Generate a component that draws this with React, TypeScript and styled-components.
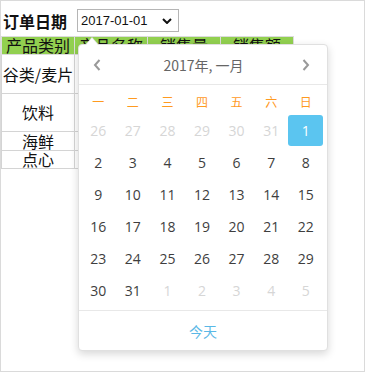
import React from "react";
import styled, { createGlobalStyle } from "styled-components";

const GlobalStyle = createGlobalStyle`
  html, body {
    margin: 0;
    padding: 0;
    background: #fff;
  }
  body {
    font-family: "Noto Sans CJK SC", "Noto Sans", sans-serif;
  }
`;

const Frame = styled.div`
  position: relative;
  width: 365px;
  height: 372px;
  box-sizing: border-box;
  border: 1px solid #dadada;
  overflow: hidden;
  background: #fff;
`;

const FilterRow = styled.div`
  display: flex;
  align-items: center;
  gap: 10px;
  padding: 8px 0 4px 2px;
`;

const Label = styled.span`
  font-size: 16px;
  font-weight: bold;
  color: #111;
  line-height: 20px;
`;

const FakeSelect = styled.div`
  display: flex;
  align-items: center;
  justify-content: space-between;
  box-sizing: border-box;
  width: 102px;
  height: 23px;
  padding: 0 6px 0 3px;
  border: 1px solid #b5b5b5;
  font-family: "Liberation Sans", Arial, sans-serif;
  font-size: 13px;
  color: #111;
`;

const Table = styled.table`
  border-collapse: collapse;
  table-layout: fixed;
  width: 290px;
  font-size: 16px;
  color: #111;
`;

const Th = styled.th`
  width: 72px;
  height: 17px;
  padding: 0;
  font-weight: normal;
  line-height: 17px;
  background: #92d050;
  border: 1px solid #dcdcdc;
  white-space: nowrap;
`;

const Td = styled.td<{ $h: number }>`
  height: ${(p) => p.$h}px;
  padding: 0;
  text-align: center;
  line-height: 17px;
  border: 1px solid #d4d4d4;
  white-space: nowrap;
`;

const Picker = styled.div`
  position: absolute;
  left: 77px;
  top: 43px;
  width: 250px;
  height: 307px;
  box-sizing: border-box;
  background: #fff;
  border: 1px solid #e0e0e0;
  border-radius: 4px;
  box-shadow: 0 3px 8px rgba(0, 0, 0, 0.16);

  &::before,
  &::after {
    content: "";
    position: absolute;
    border-style: solid;
    border-color: transparent;
  }
  &::before {
    left: 6px;
    top: -8px;
    border-width: 0 7px 8px 7px;
    border-bottom-color: #e0e0e0;
  }
  &::after {
    left: 7px;
    top: -7px;
    border-width: 0 6px 7px 6px;
    border-bottom-color: #fff;
  }
`;

const PickerHead = styled.div`
  display: flex;
  align-items: center;
  justify-content: space-between;
  height: 39px;
  padding: 0 17px 0 14px;
  border-bottom: 1px solid #e8e8e8;
`;

const Title = styled.span`
  font-size: 14px;
  color: #666;
  padding-left: 4px;
`;

const Body = styled.div`
  padding: 3px 4px 4px 2px;
`;

const Grid = styled.div`
  display: grid;
  grid-template-columns: repeat(7, 1fr);
  row-gap: 1px;
`;

const WeekDay = styled.div`
  height: 26px;
  display: flex;
  align-items: center;
  justify-content: center;
  font-size: 12px;
  color: #ff9a1f;
`;

const Day = styled.div<{ $muted?: boolean; $active?: boolean }>`
  height: 31px;
  display: flex;
  align-items: center;
  justify-content: center;
  font-family: "Open Sans", "Noto Sans", sans-serif;
  font-size: 14px;
  border-radius: 3px;
  color: ${(p) => (p.$active ? "#fff" : p.$muted ? "#d6d6d6" : "#3e3e3e")};
  background: ${(p) => (p.$active ? "#5bc5f0" : "transparent")};
`;

const Footer = styled.div`
  height: 40px;
  display: flex;
  align-items: center;
  justify-content: center;
  border-top: 1px solid #e8e8e8;
  font-size: 14px;
  color: #5ab8e6;
`;

const Chevron = ({ dir }: { dir: "left" | "right" }) => (
  <svg width="8" height="12" viewBox="0 0 8 12">
    <path
      d={dir === "left" ? "M6.5 1 L2 6 L6.5 11" : "M1.5 1 L6 6 L1.5 11"}
      fill="none"
      stroke="#999"
      strokeWidth="2"
    />
  </svg>
);

const weekDays = ["一", "二", "三", "四", "五", "六", "日"];

const days: { n: number; muted?: boolean; active?: boolean }[] = [
  ...[26, 27, 28, 29, 30, 31].map((n) => ({ n, muted: true })),
  ...Array.from({ length: 31 }, (_, i) => ({ n: i + 1, active: i === 0 })),
  ...[1, 2, 3, 4, 5].map((n) => ({ n, muted: true })),
];

const rows = [
  { cat: "谷类/麦片", h: 38 },
  { cat: "饮料", h: 37 },
  { cat: "海鲜", h: 18 },
  { cat: "点心", h: 17 },
];

export default function App() {
  return (
    <>
      <GlobalStyle />
      <Frame>
        <FilterRow>
          <Label>订单日期</Label>
          <FakeSelect>
            <span>2017-01-01</span>
            <svg width="10" height="6" viewBox="0 0 10 6">
              <path d="M1 1 L5 5 L9 1" fill="none" stroke="#111" strokeWidth="2" />
            </svg>
          </FakeSelect>
        </FilterRow>
        <Table>
          <thead>
            <tr>
              <Th>产品类别</Th>
              <Th>产品名称</Th>
              <Th>销售量</Th>
              <Th>销售额</Th>
            </tr>
          </thead>
          <tbody>
            {rows.map((r) => (
              <tr key={r.cat}>
                <Td $h={r.h}>{r.cat}</Td>
                <Td $h={r.h}></Td>
                <Td $h={r.h}></Td>
                <Td $h={r.h}></Td>
              </tr>
            ))}
          </tbody>
        </Table>
        <Picker>
          <PickerHead>
            <Chevron dir="left" />
            <Title>2017年, 一月</Title>
            <Chevron dir="right" />
          </PickerHead>
          <Body>
            <Grid>
              {weekDays.map((w) => (
                <WeekDay key={w}>{w}</WeekDay>
              ))}
              {days.map((d, i) => (
                <Day key={i} $muted={d.muted} $active={d.active}>
                  {d.n}
                </Day>
              ))}
            </Grid>
          </Body>
          <Footer>今天</Footer>
        </Picker>
      </Frame>
    </>
  );
}
